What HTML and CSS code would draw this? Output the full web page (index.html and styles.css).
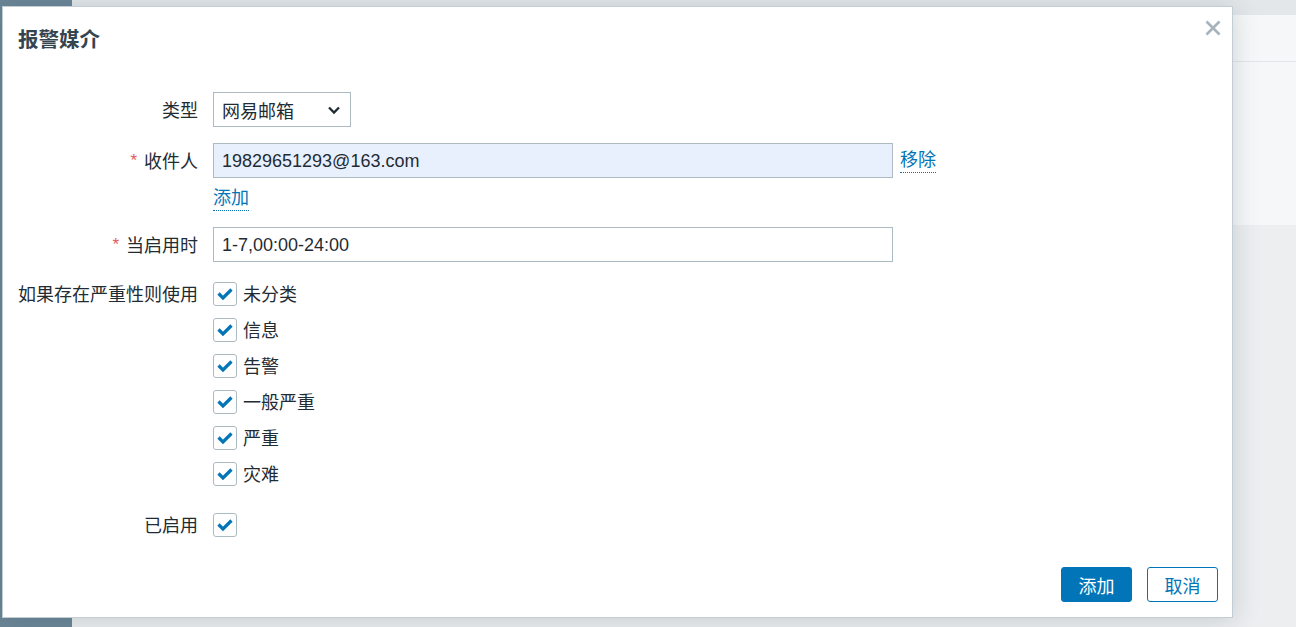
FILE: index.html
```html
<!DOCTYPE html>
<html lang="zh-CN">
<head>
<meta charset="utf-8">
<title>报警媒介</title>
<link rel="stylesheet" href="styles.css">
</head>
<body>
<div class="page">
  <aside class="sidebar"></aside>
  <main class="main">
    <div class="topband"></div>
    <div class="card">
      <div class="card-head"></div>
    </div>
  </main>
</div>

<div class="dialog">
  <div class="dialog-head">
    <h4 class="dialog-title">报警媒介</h4>
    <button class="close" aria-label="关闭">
      <svg width="16" height="16" viewBox="0 0 16 16"><path d="M1.5 1.5 L14.5 14.5 M14.5 1.5 L1.5 14.5" stroke="#a6b3ba" stroke-width="2.6" fill="none"/></svg>
    </button>
  </div>

  <div class="dialog-body">
    <div class="form">
      <div class="label l-box">类型</div>
      <div class="field">
        <div class="select">
          <span class="sel-text">网易邮箱</span>
          <svg class="chev" width="14" height="10" viewBox="0 0 14 10"><path d="M2 2.5 L7 7.5 L12 2.5" stroke="#1f2c33" stroke-width="2.3" fill="none"/></svg>
        </div>
      </div>

      <div class="label l-box row2"><span class="req">*</span>收件人</div>
      <div class="field row2">
        <div class="inline">
          <div class="input autofill">19829651293@163.com</div>
          <a class="link remove">移除</a>
        </div>
        <a class="link add">添加</a>
      </div>

      <div class="label l-box row3"><span class="req">*</span>当启用时</div>
      <div class="field row3">
        <div class="input">1-7,00:00-24:00</div>
      </div>

      <div class="label l-check row4">如果存在严重性则使用</div>
      <div class="field row4">
        <ul class="checks">
          <li><span class="cb"><svg viewBox="0 0 24 24"><path d="M5.5 11.5 L10 16 L18.5 7.5"/></svg></span><span class="ct">未分类</span></li>
          <li><span class="cb"><svg viewBox="0 0 24 24"><path d="M5.5 11.5 L10 16 L18.5 7.5"/></svg></span><span class="ct">信息</span></li>
          <li><span class="cb"><svg viewBox="0 0 24 24"><path d="M5.5 11.5 L10 16 L18.5 7.5"/></svg></span><span class="ct">告警</span></li>
          <li><span class="cb"><svg viewBox="0 0 24 24"><path d="M5.5 11.5 L10 16 L18.5 7.5"/></svg></span><span class="ct">一般严重</span></li>
          <li><span class="cb"><svg viewBox="0 0 24 24"><path d="M5.5 11.5 L10 16 L18.5 7.5"/></svg></span><span class="ct">严重</span></li>
          <li><span class="cb"><svg viewBox="0 0 24 24"><path d="M5.5 11.5 L10 16 L18.5 7.5"/></svg></span><span class="ct">灾难</span></li>
        </ul>
      </div>

      <div class="label l-check row5">已启用</div>
      <div class="field row5">
        <span class="cb"><svg viewBox="0 0 24 24"><path d="M5.5 11.5 L10 16 L18.5 7.5"/></svg></span>
      </div>
    </div>
  </div>

  <div class="dialog-foot">
    <button class="btn primary">添加</button>
    <button class="btn secondary">取消</button>
  </div>
</div>
</body>
</html>
```

FILE: styles.css
```css
* { box-sizing: border-box; }
html, body { margin: 0; padding: 0; }
body {
  width: 1296px;
  height: 627px;
  overflow: hidden;
  font-family: "Liberation Sans", "Noto Sans CJK SC", sans-serif;
  font-size: 18px;
  color: #1f2c33;
  position: relative;
}

.page { display: flex; height: 627px; }
.sidebar { width: 72px; background: #6a8596; flex: none; }
.main { flex: 1; background: #eceef0; display: flex; flex-direction: column; }
.topband { height: 15px; background: #e3e7ea; }
.card { height: 210px; background: #f6f7f8; }
.card-head { height: 47px; border-bottom: 1px solid #e2e6e8; }

.dialog {
  position: absolute;
  left: 2px;
  top: 6px;
  width: 1231px;
  height: 612px;
  background: #fff;
  border: 1px solid #c3ced4;
  box-shadow: 0 2px 24px rgba(60, 80, 95, 0.22);
  display: flex;
  flex-direction: column;
}

.dialog-head {
  height: 60px;
  padding: 21px 15px 0 15px;
  display: flex;
  justify-content: space-between;
  align-items: flex-start;
}
.dialog-title {
  margin: 0;
  font-size: 20.5px;
  line-height: 24px;
  font-weight: bold;
  color: #34454f;
}
.close {
  border: 0;
  background: none;
  padding: 0;
  margin: -8px -4px 0 0;
  width: 16px;
  height: 16px;
  cursor: pointer;
}
.close svg { display: block; }

.dialog-body { padding-top: 25px; flex: 1; }

.form {
  display: grid;
  grid-template-columns: 195px 1fr;
  column-gap: 15px;
  align-items: start;
}
.label { text-align: right; white-space: nowrap; }
.l-box { height: 35px; line-height: 39px; }
.l-check { height: 24px; line-height: 27px; }
.row2 { margin-top: 16px; }
.row3 { margin-top: 16px; }
.row4 { margin-top: 20px; }
.row5 { margin-top: 27px; }

.req { color: #e45959; margin-right: 7px; font-size: 17px; position: relative; top: -2px; }

.select {
  width: 138px;
  height: 35px;
  border: 1px solid #acbbc2;
  padding: 0 8px;
  display: flex;
  align-items: center;
  justify-content: space-between;
}
.sel-text { line-height: 24px; padding-top: 5px; }
.chev { margin-right: 1px; margin-top: 1px; }

.inline { display: flex; align-items: flex-start; }
.input {
  width: 680px;
  height: 35px;
  border: 1px solid #acbbc2;
  padding: 1px 8px 0;
  line-height: 33px;
  white-space: nowrap;
}
.autofill { background: #e8f0fe; }

.link {
  color: #0275b8;
  text-decoration: none;
  border-bottom: 1px dotted #0275b8;
}
.remove { display: block; margin-left: 7px; line-height: 24px; padding-top: 5px; height: 30px; }
.add { display: block; width: max-content; line-height: 24px; padding-top: 8px; height: 33px; }

.checks { list-style: none; margin: 0; padding: 0; display: flex; flex-direction: column; gap: 12px; }
.checks li { display: flex; align-items: flex-start; height: 24px; }
.ct { line-height: 27px; height: 24px; }
.cb {
  width: 24px;
  height: 24px;
  border: 1px solid #acbbc2;
  border-radius: 3px;
  background: #fff;
  display: inline-block;
  flex: none;
  margin-right: 6px;
  position: relative;
}
.cb svg {
  position: absolute;
  left: -1px;
  top: -1px;
  width: 24px;
  height: 24px;
}
.cb svg path { stroke: #0275b8; stroke-width: 3.2; fill: none; stroke-linejoin: miter; }
.row5 .cb { display: block; }

.dialog-foot {
  display: flex;
  justify-content: flex-end;
  gap: 15px;
  padding: 0 14px 15px 0;
}
.btn {
  height: 35px;
  width: 71px;
  font-family: "Liberation Sans", "Noto Sans CJK SC", sans-serif;
  font-size: 18px;
  border-radius: 3px;
  cursor: pointer;
  padding: 0;
}
.primary { background: #0275b8; color: #fff; border: 1px solid #0275b8; }
.secondary { background: #fff; color: #0275b8; border: 1px solid #0275b8; }
```
